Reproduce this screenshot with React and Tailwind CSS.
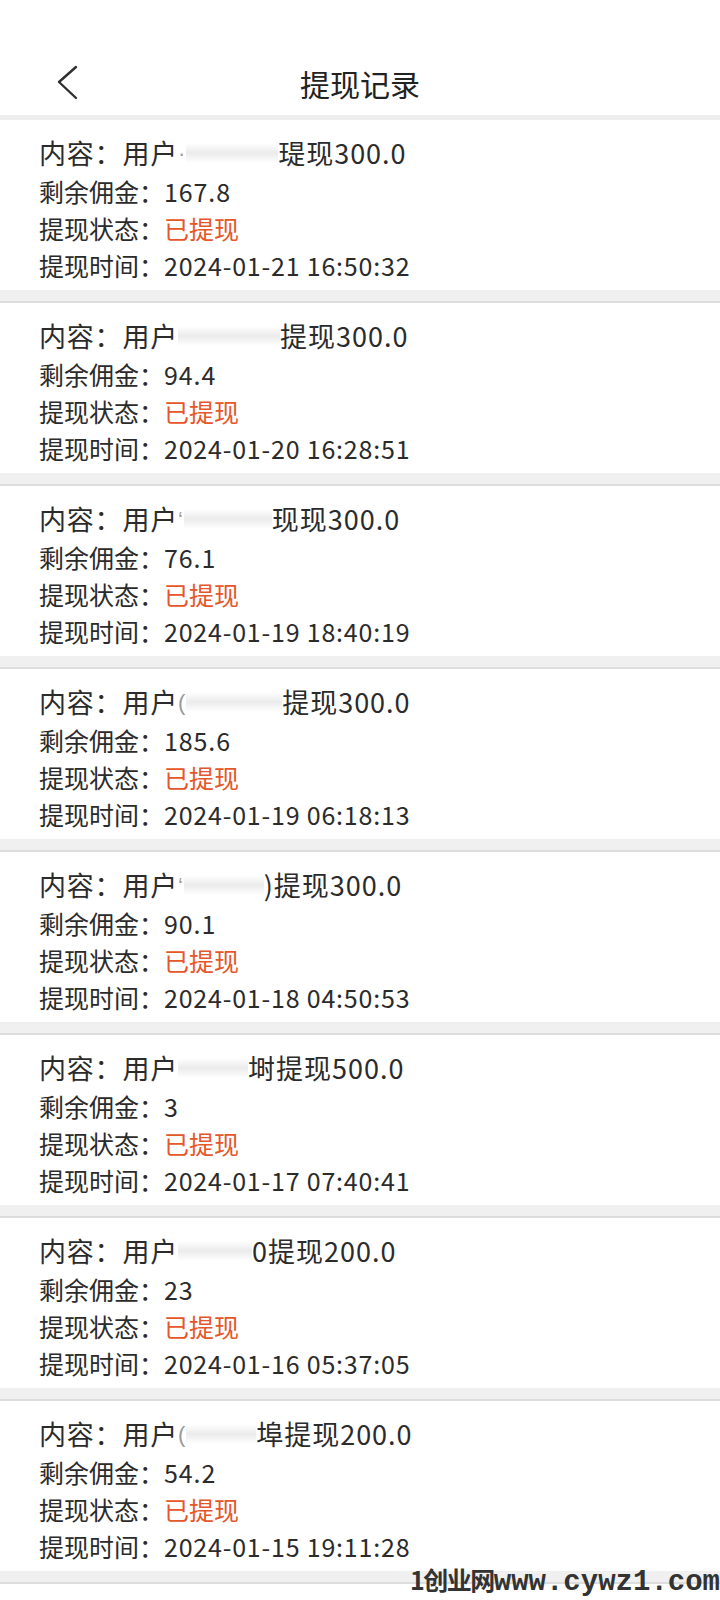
import React from 'react';

const records = [
  { pre: '·', blur: 92, tail: '瑅现300.0', left: '167.8', time: '2024-01-21 16:50:32' },
  { pre: '', blur: 102, tail: '提现300.0', left: '94.4', time: '2024-01-20 16:28:51' },
  { pre: '‘', blur: 88, tail: '现现300.0', left: '76.1', time: '2024-01-19 18:40:19' },
  { pre: '(', blur: 96, tail: '提现300.0', left: '185.6', time: '2024-01-19 06:18:13' },
  { pre: '‘', blur: 80, tail: ')提现300.0', left: '90.1', time: '2024-01-18 04:50:53' },
  { pre: '', blur: 70, tail: '埘提现500.0', left: '3', time: '2024-01-17 07:40:41' },
  { pre: '', blur: 74, tail: '0提现200.0', left: '23', time: '2024-01-16 05:37:05' },
  { pre: '(', blur: 70, tail: '埠提现200.0', left: '54.2', time: '2024-01-15 19:11:28' },
];

const font = { fontFamily: '"Noto Sans CJK SC", "Noto Sans", sans-serif' };
const latin = { fontFamily: '"Liberation Sans", sans-serif' };

const RecordCard = ({ r }) => (
  <div className="bg-white h-[170px] pl-[39px] pt-[13px] text-[#2b2b2b]">
    <div className="h-[40px] flex items-center text-[27px] tracking-[0.8px] whitespace-nowrap">
      <span>内容：用户</span>
      {r.pre && <span className="text-[#999] text-[22px]" style={latin}>{r.pre}</span>}
      <span
        className="inline-block h-[20px] bg-gradient-to-b from-white via-[#e6e6e6] to-white opacity-80"
        style={{ width: r.blur }}
      />
      <span className="tracking-[1px]">{r.tail}</span>
    </div>
    <div className="h-[37px] flex items-center text-[25px]">
      剩余佣金：<span className="tracking-[0.9px]">{r.left}</span>
    </div>
    <div className="h-[37px] flex items-center text-[25px]">
      提现状态：<span className="text-[#e5562a]">已提现</span>
    </div>
    <div className="h-[37px] flex items-center text-[25px]">
      提现时间：<span className="tracking-[0.8px]">{r.time}</span>
    </div>
  </div>
);

const App = () => {
  return (
    <div className="relative w-[720px] h-[1600px] bg-white overflow-hidden" style={font}>
      <div className="h-[115px] bg-white flex items-end pb-[14px]">
        <div className="w-[120px] pl-[56px] flex items-center h-[36px]">
          <svg width="22" height="36" viewBox="0 0 22 36" fill="none">
            <path d="M20 2 L3 17 L20 33" stroke="#2f2f2f" strokeWidth="2.4" strokeLinecap="round" strokeLinejoin="round" />
          </svg>
        </div>
        <div className="flex-1 text-center text-[30px] leading-[36px] text-[#222] pr-[120px]">提现记录</div>
      </div>
      <div className="h-[5px] bg-[#eeeeee]" />
      <div className="flex flex-col">
        {records.map((r, i) => (
          <React.Fragment key={i}>
            <RecordCard r={r} />
            <div className="h-[13px] bg-[#f0f0f0] border-b-2 border-[#dddddd]" />
          </React.Fragment>
        ))}
        <div className="h-[40px] bg-white" />
      </div>
      <div className="absolute right-0 bottom-0 flex items-baseline leading-[32px] font-bold text-[#333] pb-[1px]">
        <span className="text-[25px] tracking-[-1.5px]">1创业网</span>
        <span className="text-[29px]" style={{ fontFamily: '"Liberation Mono", monospace' }}>www.cywz1.com</span>
      </div>
    </div>
  );
};

export default App;
